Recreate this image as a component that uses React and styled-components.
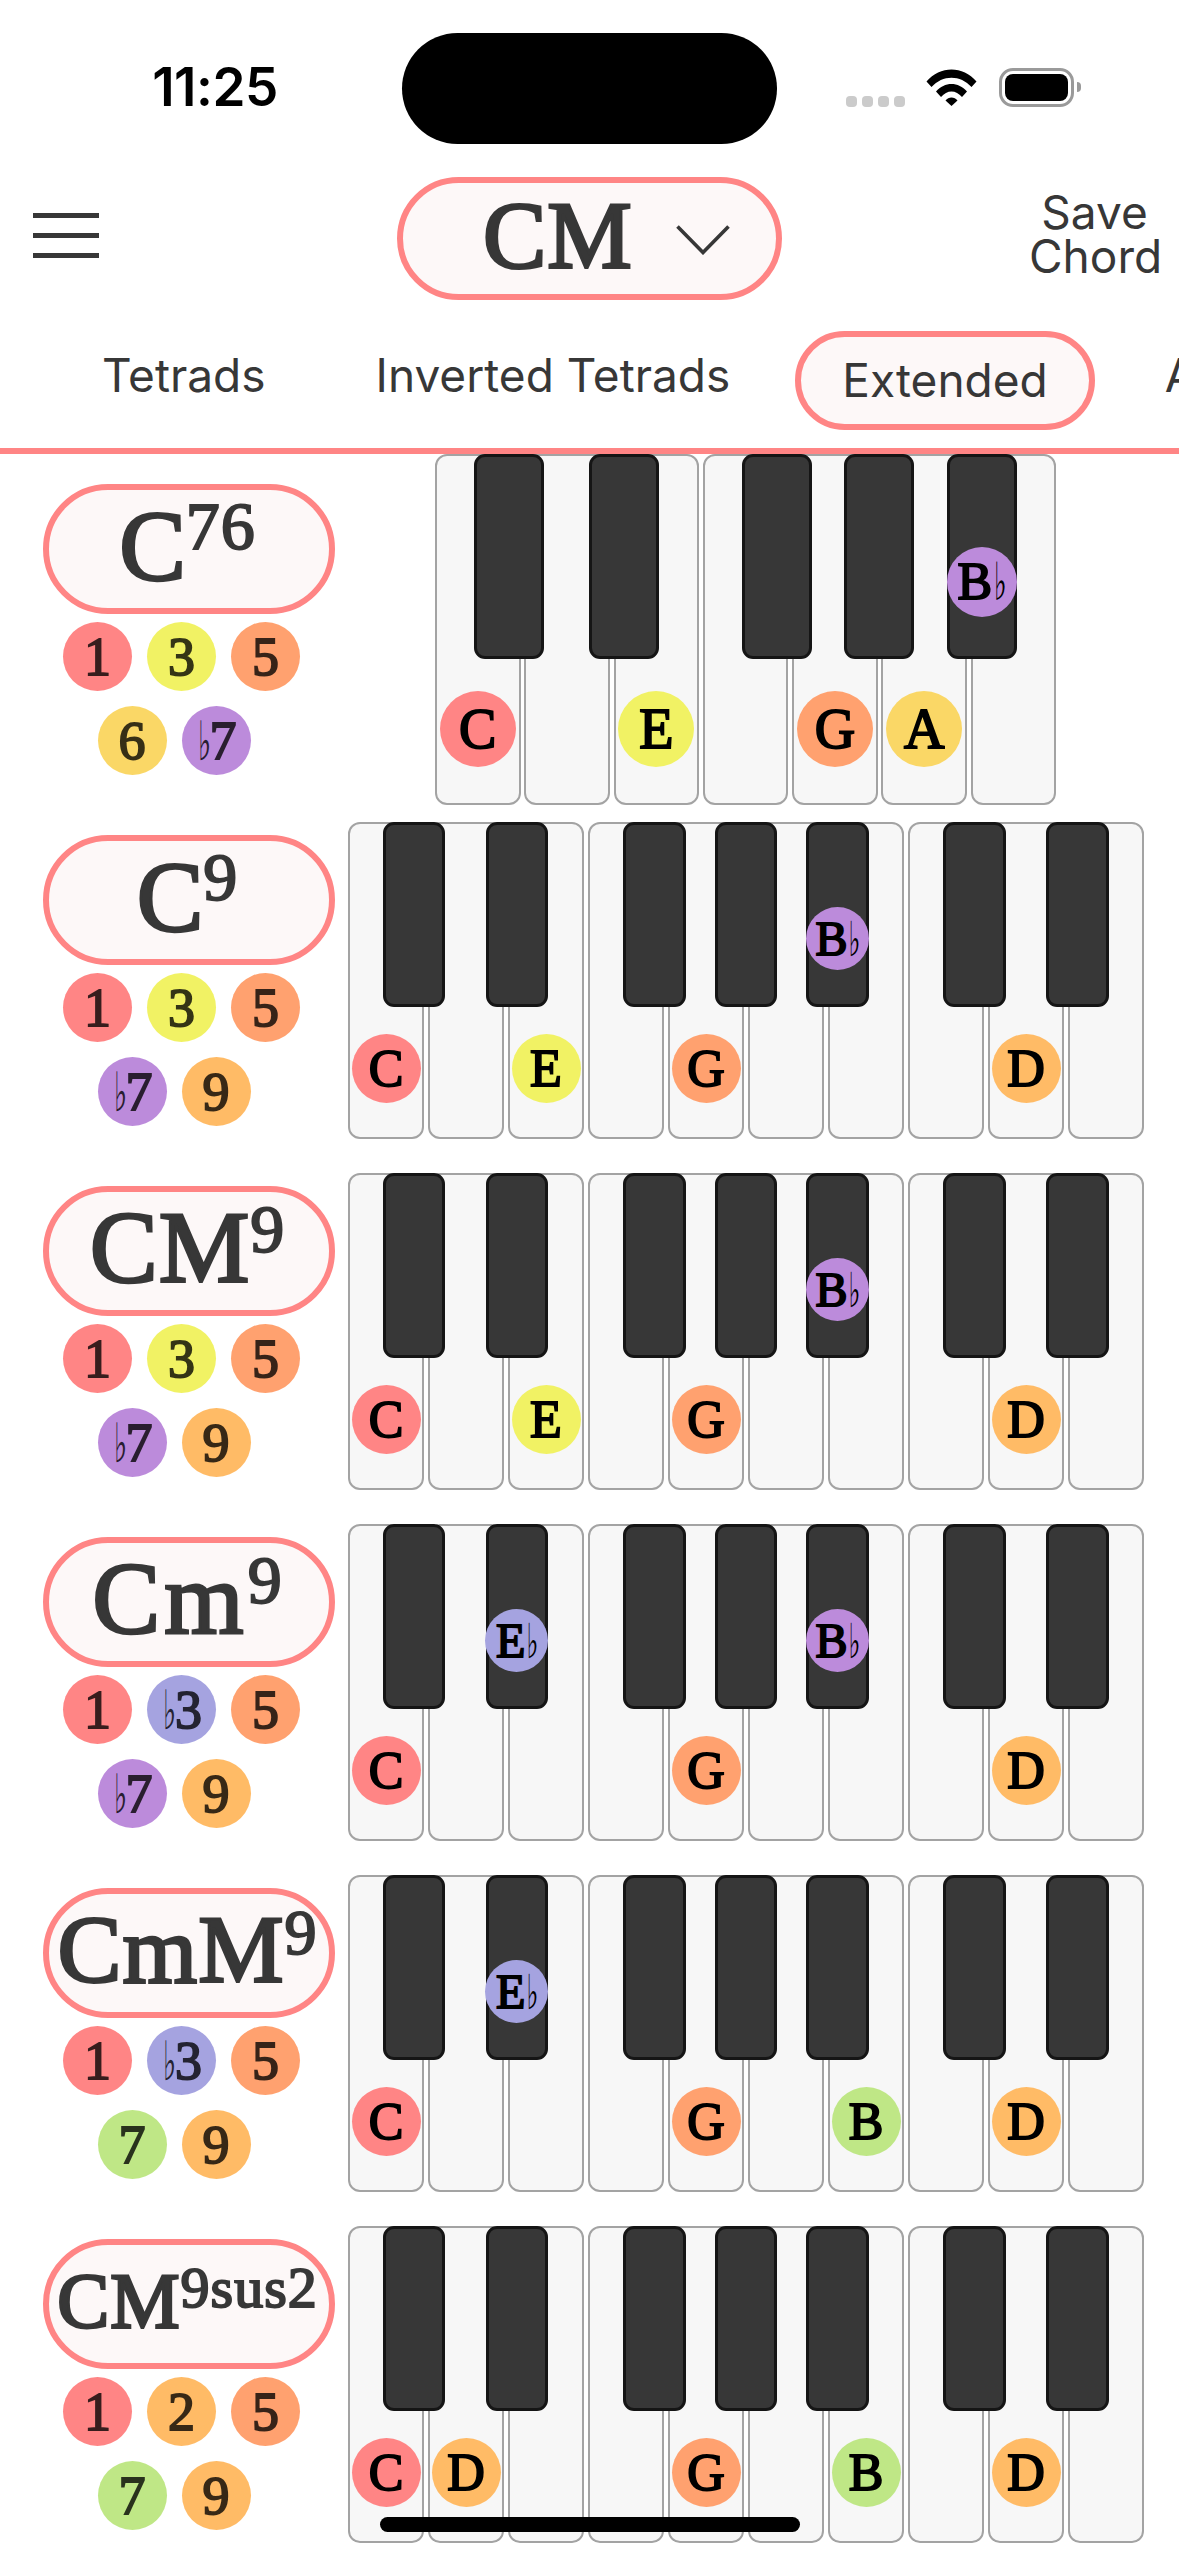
import React from "react";
import styled, { createGlobalStyle } from "styled-components";

const RED = "#ff8585";
const INK = "#373737";
const SERIF = '"Liberation Serif", "DejaVu Serif", serif';
const SANS = 'Inter, "Liberation Sans", sans-serif';

const C = {
  root: "#ff8585",
  third: "#f1f264",
  fifth: "#ffa16f",
  sixth: "#fad766",
  flat7: "#bc8bdb",
  ninth: "#ffbb66",
  flat3: "#a5a3e0",
  seventh: "#bfe786",
};

const Global = createGlobalStyle`
  html, body { margin: 0; padding: 0; background: #fff; }
  #root { width: 1179px; }
`;

const Screen = styled.div`
  position: relative;
  width: 1179px;
  height: 2556px;
  overflow: hidden;
  background: #fff;
  color: ${INK};
  font-family: ${SANS};
`;

const StatusBar = styled.div`
  display: grid;
  grid-template-columns: 402px 375px 402px;
  padding-top: 33px;
  height: 111px;
`;
const Time = styled.div`
  padding-left: 28px;
  text-align: center;
  font-size: 53px;
  font-weight: 600;
  line-height: 109px;
  color: #000;
  letter-spacing: -0.5px;
`;
const Island = styled.div`
  background: #000;
  border-radius: 56px;
`;
const StatusIcons = styled.div`
  display: flex;
  align-items: flex-end;
  height: 39px;
  margin-top: 35px;
  padding-left: 69px;
`;
const SignalDots = styled.div`
  display: flex;
  gap: 5px;
  margin-right: 21px;
`;
const SignalDot = styled.span`
  width: 11px;
  height: 11px;
  border-radius: 4px;
  background: #cbcbcb;
`;
const Wifi = styled.svg`
  width: 51px;
  height: 37px;
  margin: 0 22px 1px 0;
`;
const Battery = styled.div`
  position: relative;
  box-sizing: border-box;
  width: 75px;
  height: 39px;
  padding: 3px;
  border: 3px solid #9a9a9a;
  border-radius: 14px;
  &::after {
    content: "";
    position: absolute;
    right: -10px;
    top: 11px;
    width: 4px;
    height: 10px;
    border-radius: 0 5px 5px 0;
    background: #9a9a9a;
  }
`;
const BatteryFill = styled.div`
  height: 100%;
  border-radius: 8px;
  background: #000;
`;

const Nav = styled.div`
  display: flex;
  align-items: center;
  height: 123px;
  margin-top: 33px;
  padding-left: 33px;
`;
const Burger = styled.div`
  display: flex;
  flex-direction: column;
  gap: 15px;
  width: 66px;
  margin-bottom: 7px;
`;
const BurgerBar = styled.span`
  height: 5px;
  background: ${INK};
`;
const KeyPill = styled.div`
  box-sizing: border-box;
  display: flex;
  align-items: center;
  gap: 43px;
  width: 385px;
  height: 123px;
  margin-left: 298px;
  padding-left: 80px;
  border: 6px solid ${RED};
  border-radius: 62px;
  background: #fdf8f8;
`;
const KeyName = styled.span`
  padding-bottom: 4px;
  font-family: ${SERIF};
  font-size: 95px;
  line-height: 1;
  letter-spacing: 1px;
  -webkit-text-stroke: 3px ${INK};
`;
const Chevron = styled.svg`
  width: 54px;
  height: 30px;
  margin-top: 3px;
`;
const SaveChord = styled.div`
  width: 131px;
  margin: 0 0 9px 247px;
  text-align: center;
  font-size: 46px;
  line-height: 44px;
`;

const Tabs = styled.div`
  display: flex;
  align-items: center;
  height: 99px;
  margin-top: 31px;
  padding-left: 54px;
  white-space: nowrap;
  overflow: hidden;
`;
const Tab = styled.div`
  box-sizing: border-box;
  flex: none;
  height: 99px;
  margin-right: ${(p) => p.$gap}px;
  padding: ${(p) => (p.$active ? "0 41px" : "0 42px 10px")};
  border: 6px solid ${(p) => (p.$active ? RED : "transparent")};
  border-radius: 50px;
  background: ${(p) => (p.$active ? "#fdf8f8" : "transparent")};
  font-size: 46px;
  line-height: ${(p) => (p.$active ? 87 : 77)}px;
`;
const Rule = styled.div`
  height: 6px;
  margin-top: 18px;
  background: ${RED};
`;

const ChordRow = styled.div`
  display: flex;
  align-items: flex-start;
  padding-bottom: ${(p) => (p.$big ? 17 : 34)}px;
`;
const Side = styled.div`
  box-sizing: border-box;
  flex: none;
  width: 348px;
  padding: ${(p) => (p.$big ? 30 : 13)}px 0 0 43px;
`;
const ChordPill = styled.div`
  box-sizing: border-box;
  display: flex;
  align-items: center;
  justify-content: center;
  width: 292px;
  height: 130px;
  padding: 0 3px 6px 0;
  border: 6px solid ${RED};
  border-radius: 65px;
  background: #fdf8f8;
`;
const ChordText = styled.span`
  font-family: ${SERIF};
  font-size: ${(p) => p.$size}px;
  line-height: 1;
  letter-spacing: ${(p) => p.$track}px;
  white-space: nowrap;
  -webkit-text-stroke: 2.8px ${INK};
`;
const ChordSup = styled.span`
  font-size: ${(p) => p.$size}px;
  line-height: 0;
  letter-spacing: 1px;
  vertical-align: ${(p) => p.$raise}px;
  -webkit-text-stroke: 2px ${INK};
`;
const Intervals = styled.div`
  display: flex;
  flex-direction: column;
  gap: 15px;
  margin-top: 8px;
`;
const IntervalRow = styled.div`
  display: flex;
  gap: 15px;
  padding-left: ${(p) => p.$indent}px;
`;
const IntervalDot = styled.div`
  display: flex;
  align-items: center;
  justify-content: center;
  width: 69px;
  height: 69px;
  border-radius: 50%;
  background: ${(p) => p.$color};
`;
const IntervalLabel = styled.span`
  font-family: ${SERIF};
  font-size: 54px;
  line-height: 1;
  color: #000;
  opacity: 0.78;
  -webkit-text-stroke: 1.8px #000;
`;
const Flat = styled.span`
  font-family: "DejaVu Sans", sans-serif;
  font-size: 0.72em;
  font-weight: 400;
  -webkit-text-stroke: 0;
  display: inline-block;
  width: 0.36em;
  transform: scale(0.72, 1.4);
  transform-origin: 50% 75%;
`;

const Piano = styled.div`
  position: relative;
  flex: none;
  display: grid;
  grid-template-columns: repeat(${(p) => p.$keys}, ${(p) => p.$keyW}px);
  column-gap: ${(p) => p.$gap}px;
  height: ${(p) => p.$h}px;
  margin-left: ${(p) => p.$offset}px;
`;
const WhiteKey = styled.div`
  box-sizing: border-box;
  display: flex;
  align-items: flex-end;
  justify-content: center;
  padding-bottom: ${(p) => p.$pad}px;
  border: 2px solid #a3a3a3;
  border-radius: 12px;
  background: #f7f7f7;
`;
const BlackKey = styled.div`
  position: absolute;
  top: 0;
  box-sizing: border-box;
  display: flex;
  justify-content: center;
  height: ${(p) => p.$h}px;
  width: ${(p) => p.$w}px;
  padding-top: ${(p) => p.$pad}px;
  border: 3px solid #151515;
  border-radius: 11px;
  background: ${INK};
`;
const NoteDot = styled.div`
  flex: none;
  display: flex;
  align-items: center;
  justify-content: center;
  width: ${(p) => p.$d}px;
  height: ${(p) => p.$d}px;
  border-radius: 50%;
  background: ${(p) => p.$color};
`;
const NoteLabel = styled.span`
  font-family: ${SERIF};
  font-size: ${(p) => p.$size}px;
  line-height: 1;
  color: #000;
  white-space: nowrap;
  -webkit-text-stroke: 1.9px #000;
`;

const HomeBar = styled.div`
  position: absolute;
  left: 380px;
  top: 2517px;
  width: 420px;
  height: 15px;
  border-radius: 8px;
  background: #000;
`;

const BLACK_OFFSETS = [0.434, 1.72, 3.44, 4.585, 5.73, 7.44, 8.73];

const withFlat = (s) =>
  s.startsWith("b") && s.length > 1 ? (
    <>
      <Flat>♭</Flat>
      {s.slice(1)}
    </>
  ) : s.endsWith("b") ? (
    <>
      {s.slice(0, -1)}
      <Flat>♭</Flat>
    </>
  ) : (
    s
  );

const CHORDS = [
  {
    base: "C", sup: "76", big: true, size: 100, supSize: 68, raise: 30, track: 0,
    dots: [["1", C.root], ["3", C.third], ["5", C.fifth], ["6", C.sixth], ["b7", C.flat7]],
    white: { 0: ["C", C.root], 2: ["E", C.third], 4: ["G", C.fifth], 5: ["A", C.sixth] },
    black: { 4: ["Bb", C.flat7] },
  },
  {
    base: "C", sup: "9", size: 100, supSize: 68, raise: 30, track: 0,
    dots: [["1", C.root], ["3", C.third], ["5", C.fifth], ["b7", C.flat7], ["9", C.ninth]],
    white: { 0: ["C", C.root], 2: ["E", C.third], 4: ["G", C.fifth], 8: ["D", C.ninth] },
    black: { 4: ["Bb", C.flat7] },
  },
  {
    base: "CM", sup: "9", size: 102, supSize: 68, raise: 30, track: 1,
    dots: [["1", C.root], ["3", C.third], ["5", C.fifth], ["b7", C.flat7], ["9", C.ninth]],
    white: { 0: ["C", C.root], 2: ["E", C.third], 4: ["G", C.fifth], 8: ["D", C.ninth] },
    black: { 4: ["Bb", C.flat7] },
  },
  {
    base: "Cm", sup: "9", size: 102, supSize: 68, raise: 30, track: 4,
    dots: [["1", C.root], ["b3", C.flat3], ["5", C.fifth], ["b7", C.flat7], ["9", C.ninth]],
    white: { 0: ["C", C.root], 4: ["G", C.fifth], 8: ["D", C.ninth] },
    black: { 1: ["Eb", C.flat3], 4: ["Bb", C.flat7] },
  },
  {
    base: "CmM", sup: "9", size: 96, supSize: 64, raise: 28, track: 1,
    dots: [["1", C.root], ["b3", C.flat3], ["5", C.fifth], ["7", C.seventh], ["9", C.ninth]],
    white: { 0: ["C", C.root], 4: ["G", C.fifth], 6: ["B", C.seventh], 8: ["D", C.ninth] },
    black: { 1: ["Eb", C.flat3] },
  },
  {
    base: "CM", sup: "9sus2", size: 78, supSize: 58, raise: 20, track: 1,
    dots: [["1", C.root], ["2", C.ninth], ["5", C.fifth], ["7", C.seventh], ["9", C.ninth]],
    white: { 0: ["C", C.root], 1: ["D", C.ninth], 4: ["G", C.fifth], 6: ["B", C.seventh], 8: ["D", C.ninth] },
    black: {},
  },
];

function Keyboard({ big, white, black }) {
  const cfg = big
    ? { keys: 7, keyW: 85.5, gap: 3.8, h: 351, offset: 87, blackW: 70, blackH: 205, whitePad: 36, blackPad: 90, d: 76, blackD: 70, size: 56, blackSize: 52, blacks: 5 }
    : { keys: 10, keyW: 76, gap: 4, h: 317, offset: 0, blackW: 62.5, blackH: 185, whitePad: 34, blackPad: 82, d: 69, blackD: 63, size: 52, blackSize: 48, blacks: 7 };
  const pitch = cfg.keyW + cfg.gap;
  return (
    <Piano $keys={cfg.keys} $keyW={cfg.keyW} $gap={cfg.gap} $h={cfg.h} $offset={cfg.offset}>
      {Array.from({ length: cfg.keys }, (_, i) => (
        <WhiteKey key={i} $pad={cfg.whitePad}>
          {white[i] && (
            <NoteDot $d={cfg.d} $color={white[i][1]}>
              <NoteLabel $size={cfg.size}>{white[i][0]}</NoteLabel>
            </NoteDot>
          )}
        </WhiteKey>
      ))}
      {BLACK_OFFSETS.slice(0, cfg.blacks).map((o, i) => (
        <BlackKey key={i} $w={cfg.blackW} $h={cfg.blackH} $pad={cfg.blackPad} style={{ left: o * pitch }}>
          {black[i] && (
            <NoteDot $d={cfg.blackD} $color={black[i][1]}>
              <NoteLabel $size={cfg.blackSize}>{withFlat(black[i][0])}</NoteLabel>
            </NoteDot>
          )}
        </BlackKey>
      ))}
    </Piano>
  );
}

function Chord({ c }) {
  const top = c.dots.slice(0, 3);
  const bottom = c.dots.slice(3);
  return (
    <ChordRow $big={c.big}>
      <Side $big={c.big}>
        <ChordPill>
          <ChordText $size={c.size} $track={c.track}>
            {c.base}
            <ChordSup $size={c.supSize} $raise={c.raise}>{c.sup}</ChordSup>
          </ChordText>
        </ChordPill>
        <Intervals>
          {[top, bottom].map((row, r) => (
            <IntervalRow key={r} $indent={r === 0 ? 20 : 54.5}>
              {row.map(([label, color]) => (
                <IntervalDot key={label} $color={color}>
                  <IntervalLabel>{withFlat(label)}</IntervalLabel>
                </IntervalDot>
              ))}
            </IntervalRow>
          ))}
        </Intervals>
      </Side>
      <Keyboard big={c.big} white={c.white} black={c.black} />
    </ChordRow>
  );
}

export default function App() {
  return (
    <Screen>
      <Global />
      <StatusBar>
        <Time>11:25</Time>
        <Island />
        <StatusIcons>
          <SignalDots>
            {[0, 1, 2, 3].map((i) => (
              <SignalDot key={i} />
            ))}
          </SignalDots>
          <Wifi viewBox="0 0 51 37">
            <path d="M0.5 12.5 C14 -3.5 37 -3.5 50.5 12.5 L45.5 18 C34.5 5.5 16.5 5.5 5.5 18 Z" fill="#000" />
            <path d="M10 22.5 C18.5 12.5 32.5 12.5 41 22.5 L36 28 C30 20.5 21 20.5 15 28 Z" fill="#000" />
            <path d="M19.5 31.5 C22.5 27.5 28.5 27.5 31.5 31.5 L25.5 37 Z" fill="#000" />
          </Wifi>
          <Battery>
            <BatteryFill />
          </Battery>
        </StatusIcons>
      </StatusBar>
      <Nav>
        <Burger>
          <BurgerBar />
          <BurgerBar />
          <BurgerBar />
        </Burger>
        <KeyPill>
          <KeyName>CM</KeyName>
          <Chevron viewBox="0 0 54 30">
            <polyline points="1.5,1.5 27,27.5 52.5,1.5" fill="none" stroke={INK} strokeWidth="3.6" />
          </Chevron>
        </KeyPill>
        <SaveChord>
          Save
          <br />
          Chord
        </SaveChord>
      </Nav>
      <Tabs>
        <Tab $gap={14}>Tetrads</Tab>
        <Tab $gap={17}>Inverted Tetrads</Tab>
        <Tab $active $gap={22}>Extended</Tab>
        <Tab $gap={15}>Added</Tab>
      </Tabs>
      <Rule />
      {CHORDS.map((c) => (
        <Chord key={c.base + c.sup} c={c} />
      ))}
      <HomeBar />
    </Screen>
  );
}
